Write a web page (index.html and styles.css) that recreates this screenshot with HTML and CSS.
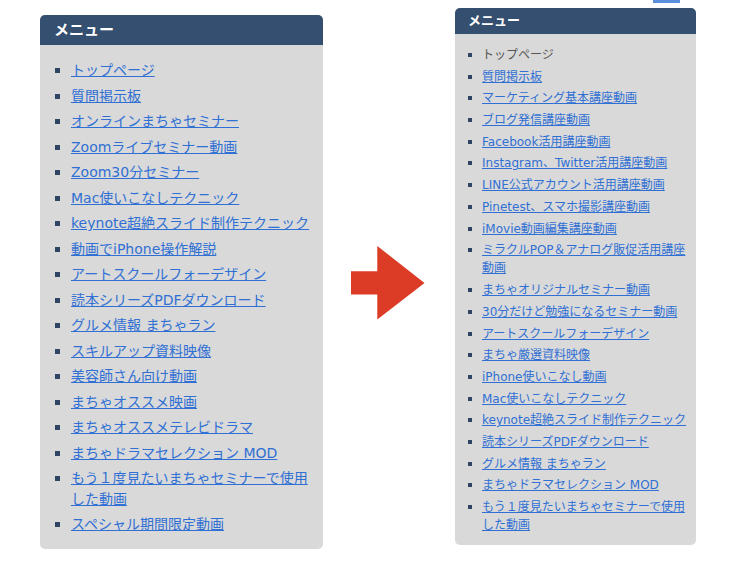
FILE: index.html
```html
<!DOCTYPE html>
<html>
<head>
  <meta charset="utf-8">
  <meta name="viewport" content="width=device-width, initial-scale=1.0">
  <title>メニュー比較</title>
  <link rel="stylesheet" href="styles.css">
</head>
<body>
  <div class="page">
    <div class="col-before">
      <div class="menu-box">
        <div class="menu-title">メニュー</div>
        <ul class="menu-list">
          <li><a href="#">トップページ</a></li>
          <li><a href="#">質問掲示板</a></li>
          <li><a href="#">オンラインまちゃセミナー</a></li>
          <li><a href="#">Zoomライブセミナー動画</a></li>
          <li><a href="#">Zoom30分セミナー</a></li>
          <li><a href="#">Mac使いこなしテクニック</a></li>
          <li><a href="#">keynote超絶スライド制作テクニック</a></li>
          <li><a href="#">動画でiPhone操作解説</a></li>
          <li><a href="#">アートスクールフォーデザイン</a></li>
          <li><a href="#">読本シリーズPDFダウンロード</a></li>
          <li><a href="#">グルメ情報 まちゃラン</a></li>
          <li><a href="#">スキルアップ資料映像</a></li>
          <li><a href="#">美容師さん向け動画</a></li>
          <li><a href="#">まちゃオススメ映画</a></li>
          <li><a href="#">まちゃオススメテレビドラマ</a></li>
          <li><a href="#">まちゃドラマセレクション MOD</a></li>
          <li><a href="#">もう１度見たいまちゃセミナーで使用した動画</a></li>
          <li><a href="#">スペシャル期間限定動画</a></li>
        </ul>
      </div>
    </div>

    <div class="arrow">
      <svg width="74" height="74" viewBox="0 0 74 74">
        <polygon points="0,25.3 26.3,25.3 26.3,0 73.5,37 26.3,73.5 26.3,48.5 0,48.5" fill="#dc3b26"/>
      </svg>
    </div>

    <div class="col-after">
      <div class="top-tab"></div>
      <div class="menu-box small">
        <div class="menu-title">メニュー</div>
        <ul class="menu-list">
          <li><span class="current">トップページ</span></li>
          <li><a href="#">質問掲示板</a></li>
          <li><a href="#">マーケティング基本講座動画</a></li>
          <li><a href="#">ブログ発信講座動画</a></li>
          <li><a href="#">Facebook活用講座動画</a></li>
          <li><a href="#">Instagram、Twitter活用講座動画</a></li>
          <li><a href="#">LINE公式アカウント活用講座動画</a></li>
          <li><a href="#">Pinetest、スマホ撮影講座動画</a></li>
          <li><a href="#">iMovie動画編集講座動画</a></li>
          <li><a href="#">ミラクルPOP＆アナログ販促活用講座動画</a></li>
          <li><a href="#">まちゃオリジナルセミナー動画</a></li>
          <li><a href="#">30分だけど勉強になるセミナー動画</a></li>
          <li><a href="#">アートスクールフォーデザイン</a></li>
          <li><a href="#">まちゃ厳選資料映像</a></li>
          <li><a href="#">iPhone使いこなし動画</a></li>
          <li><a href="#">Mac使いこなしテクニック</a></li>
          <li><a href="#">keynote超絶スライド制作テクニック</a></li>
          <li><a href="#">読本シリーズPDFダウンロード</a></li>
          <li><a href="#">グルメ情報 まちゃラン</a></li>
          <li><a href="#">まちゃドラマセレクション MOD</a></li>
          <li><a href="#">もう１度見たいまちゃセミナーで使用した動画</a></li>
        </ul>
      </div>
    </div>
  </div>
</body>
</html>
```

FILE: styles.css
```css
body { margin: 0; padding: 0; background: #fff; font-family: "DejaVu Sans", "Noto Sans CJK JP", sans-serif; }
.page { display: flex; align-items: flex-start; padding-left: 40px; }

.col-before { margin-top: 15px; width: 283px; }
.arrow { margin-top: 246px; margin-left: 28px; line-height: 0; }
.col-after { margin-left: 30px; width: 241px; display: flex; flex-direction: column; }
.top-tab { align-self: flex-end; width: 27px; height: 3px; margin-right: 16px; background: #5a8fe0; }

.menu-box { background: #d9d9d9; border-radius: 5px; overflow: hidden; }
.menu-title { background: #344f70; color: #fff; font-weight: bold; font-size: 15px; height: 30px; line-height: 30px; padding-left: 14px; }
.menu-list { list-style: none; margin: 0; padding: 15px 10px 14px 15px; display: flex; flex-direction: column; gap: 5px; font-size: 14px; line-height: 20.5px; }
.menu-list li { display: flex; }
.menu-list li::before { content: ""; flex: none; width: 5px; height: 5px; margin-top: 8px; margin-right: 11px; background: #2f4363; }
.menu-list a { color: #3070d4; text-decoration: underline; }

.menu-box.small { margin-top: 5px; }
.small .menu-title { font-size: 13px; height: 26px; line-height: 26px; padding-left: 13px; }
.small .menu-list { padding: 12px 7px 10px 13px; gap: 3.4px; font-size: 12px; line-height: 18.3px; }
.small .menu-list li::before { width: 4px; height: 4px; margin-top: 7px; margin-right: 10px; }
.small .current { color: #555; }
```
